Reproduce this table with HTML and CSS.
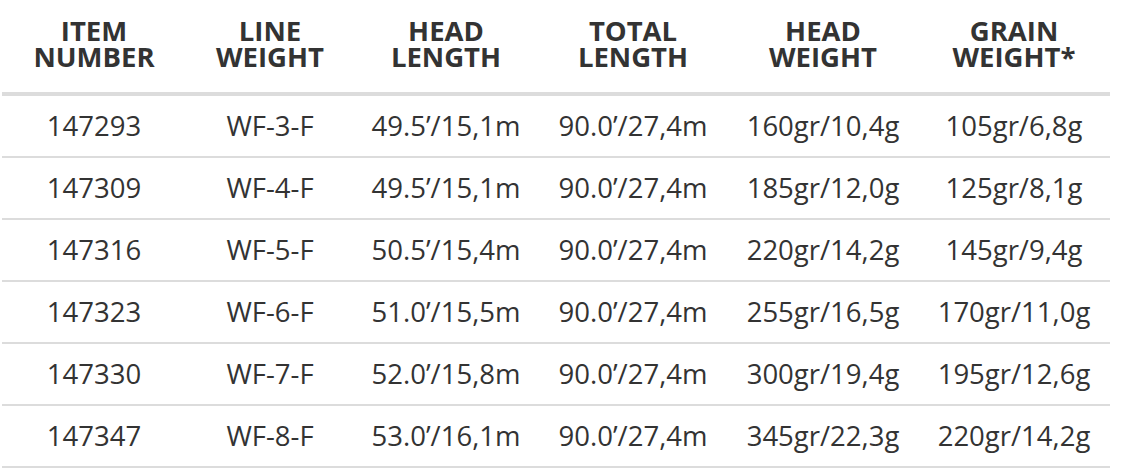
FILE: index.html
```html
<!DOCTYPE html>
<html lang="en">
<head>
<meta charset="utf-8">
<title>Line specs</title>
<link rel="stylesheet" href="styles.css">
</head>
<body>
<table class="specs">
  <colgroup>
    <col class="c1"><col class="c2"><col class="c3"><col class="c4"><col class="c5"><col class="c6">
  </colgroup>
  <thead>
    <tr>
      <th>Item<br>Number</th>
      <th>Line<br>Weight</th>
      <th>Head<br>Length</th>
      <th>Total<br>Length</th>
      <th>Head<br>Weight</th>
      <th>Grain<br>Weight*</th>
    </tr>
  </thead>
  <tbody>
    <tr><td>147293</td><td>WF-3-F</td><td>49.5’/15,1m</td><td>90.0’/27,4m</td><td>160gr/10,4g</td><td>105gr/6,8g</td></tr>
    <tr><td>147309</td><td>WF-4-F</td><td>49.5’/15,1m</td><td>90.0’/27,4m</td><td>185gr/12,0g</td><td>125gr/8,1g</td></tr>
    <tr><td>147316</td><td>WF-5-F</td><td>50.5’/15,4m</td><td>90.0’/27,4m</td><td>220gr/14,2g</td><td>145gr/9,4g</td></tr>
    <tr><td>147323</td><td>WF-6-F</td><td>51.0’/15,5m</td><td>90.0’/27,4m</td><td>255gr/16,5g</td><td>170gr/11,0g</td></tr>
    <tr><td>147330</td><td>WF-7-F</td><td>52.0’/15,8m</td><td>90.0’/27,4m</td><td>300gr/19,4g</td><td>195gr/12,6g</td></tr>
    <tr><td>147347</td><td>WF-8-F</td><td>53.0’/16,1m</td><td>90.0’/27,4m</td><td>345gr/22,3g</td><td>220gr/14,2g</td></tr>
  </tbody>
</table>
</body>
</html>
```
FILE: styles.css
```css
html, body {
  margin: 0;
  padding: 0;
  background: #fff;
}
body {
  font-family: "Open Sans", "Liberation Sans", sans-serif;
  color: #333;
}
.specs {
  margin-left: 2px;
  width: 1108px;
  border-collapse: collapse;
  table-layout: fixed;
}
.c1 { width: 184px; }
.c2 { width: 168px; }
.c3 { width: 184px; }
.c4 { width: 190px; }
.c5 { width: 190px; }
.c6 { width: 192px; }
.specs th {
  font-weight: 700;
  font-size: 27.5px;
  line-height: 26px;
  text-transform: uppercase;
  text-align: center;
  padding: 18px 0 22px;
  border-bottom: 4px solid #dcdcdc;
  vertical-align: bottom;
}
.specs td {
  font-size: 27.5px;
  line-height: 36px;
  text-align: center;
  height: 60px;
  padding: 0;
  border-bottom: 2px solid #dcdcdc;
  vertical-align: middle;
  white-space: nowrap;
}
```
